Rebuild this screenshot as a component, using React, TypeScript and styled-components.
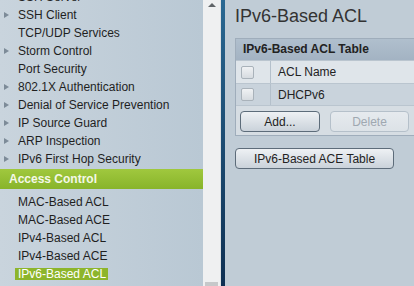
import React from "react";
import styled, { createGlobalStyle } from "styled-components";

const GlobalStyle = createGlobalStyle`
  html, body {
    margin: 0;
    padding: 0;
  }
  body {
    font-family: "Liberation Sans", Arial, sans-serif;
    font-size: 12px;
    overflow: hidden;
  }
`;

const Page = styled.div`
  display: flex;
  width: 414px;
  height: 286px;
  overflow: hidden;
`;

const Sidebar = styled.nav`
  width: 203px;
  flex-shrink: 0;
  background: linear-gradient(to right, #c9d4dd, #b9c8d4);
  overflow: hidden;
`;

const NavList = styled.ul`
  list-style: none;
  margin: -12px 0 0;
  padding: 0;
`;

const NavItem = styled.li`
  display: flex;
  align-items: center;
  height: 18px;
  color: #1f1f1f;
  white-space: nowrap;
`;

const ArrowSlot = styled.span`
  display: flex;
  align-items: center;
  width: 18px;
  padding-left: 4px;
  box-sizing: border-box;
  flex-shrink: 0;
`;

const SectionBar = styled.div`
  margin-top: 1px;
  height: 20px;
  line-height: 20px;
  padding-left: 9px;
  font-weight: bold;
  color: #f4f8e8;
  background: linear-gradient(#a0c83e, #88b42a);
`;

const SubList = styled.ul`
  list-style: none;
  margin: 4px 0 0;
  padding: 0;
`;

const SubItem = styled.li`
  height: 18px;
  line-height: 18px;
  padding-left: 18px;
  color: #1f1f1f;
  white-space: nowrap;
`;

const Selected = styled.span`
  display: inline-block;
  line-height: 12px;
  padding: 0 2px 0 3px;
  margin-left: -3px;
  background: #8db52b;
  color: #fff;
`;

const Scrollbar = styled.div`
  width: 18px;
  flex-shrink: 0;
  display: flex;
  flex-direction: column;
  align-items: center;
  background: #eff0f1;
  border-right: 1px solid #dfe2e4;
  box-sizing: border-box;
`;

const ScrollArrow = styled.span`
  margin-top: 3px;
  width: 0;
  height: 0;
  border-left: 4px solid transparent;
  border-right: 4px solid transparent;
  border-bottom: 4px solid #606468;
`;

const ScrollThumb = styled.span`
  margin-top: auto;
  width: 13px;
  height: 4px;
  background: #c6c8ca;
`;

const Divider = styled.div`
  width: 4px;
  flex-shrink: 0;
  background: linear-gradient(#2a6892, #0e2f52);
`;

const Main = styled.main`
  flex: 1;
  min-width: 0;
  padding-left: 10px;
  background: #c0ccd6;
  overflow: hidden;
`;

const Title = styled.h1`
  margin: 0 0 11px;
  padding-top: 6px;
  font-size: 18px;
  line-height: 21px;
  font-weight: normal;
  color: #333;
  white-space: nowrap;
`;

const Panel = styled.div`
  width: 200px;
  border: 1px solid #9fadbb;
  border-right: none;
  background: #d6dde3;
`;

const PanelHeader = styled.div`
  height: 21px;
  line-height: 21px;
  padding-left: 7px;
  font-weight: bold;
  color: #222;
  background: linear-gradient(#b0bfcd, #a3b3c3);
  white-space: nowrap;
`;

const Row = styled.div<{ $tone: "light" | "dark" }>`
  display: flex;
  height: ${(p) => (p.$tone === "light" ? 23 : 22)}px;
  background: ${(p) => (p.$tone === "light" ? "#dfe5ea" : "#c9d3dc")};
  border-top: 1px solid #bac5cf;
  box-sizing: border-box;
`;

const CheckCell = styled.div`
  width: 35px;
  flex-shrink: 0;
  display: flex;
  align-items: center;
  padding-left: 5px;
  box-sizing: border-box;
  border-right: 1px solid #b4c0cb;
`;

const Checkbox = styled.span`
  width: 13px;
  height: 13px;
  box-sizing: border-box;
  border: 1px solid #a9b2ba;
  border-radius: 2px;
  background: linear-gradient(#f0f2f4, #d6dbe0);
`;

const NameCell = styled.div`
  display: flex;
  align-items: center;
  padding-left: 7px;
  color: #222;
  white-space: nowrap;
`;

const ButtonRow = styled.div`
  display: flex;
  gap: 10px;
  height: 30px;
  padding: 5px 4px 0;
  box-sizing: border-box;
  border-top: 1px solid #bac5cf;
  background: #d6dde3;
`;

const Button = styled.button<{ $width: number }>`
  width: ${(p) => p.$width}px;
  height: 21px;
  padding: 0;
  flex-shrink: 0;
  font-family: "Liberation Sans", Arial, sans-serif;
  font-size: 12px;
  color: #222;
  border: 1px solid #5d6c7a;
  border-radius: 4px;
  background: linear-gradient(#eef1f4, #cad2da);

  &:disabled {
    color: #9fa8b1;
    border-color: #b5c0ca;
    background: linear-gradient(#e6eaee, #dce2e7);
  }
`;

const StandaloneButton = styled(Button)`
  margin-top: 12px;
  display: block;
`;

const Arrow = () => (
  <svg width="5" height="6" viewBox="0 0 5 6">
    <path d="M0 0 L5 3 L0 6 Z" fill="#7d8b98" />
  </svg>
);

const navItems = [
  { label: "SSH Server", arrow: true },
  { label: "SSH Client", arrow: true },
  { label: "TCP/UDP Services", arrow: false },
  { label: "Storm Control", arrow: true },
  { label: "Port Security", arrow: false },
  { label: "802.1X Authentication", arrow: true },
  { label: "Denial of Service Prevention", arrow: true },
  { label: "IP Source Guard", arrow: true },
  { label: "ARP Inspection", arrow: true },
  { label: "IPv6 First Hop Security", arrow: true },
];

const accessItems = [
  "MAC-Based ACL",
  "MAC-Based ACE",
  "IPv4-Based ACL",
  "IPv4-Based ACE",
  "IPv6-Based ACL",
];

const App = () => {
  return (
    <Page>
      <GlobalStyle />
      <Sidebar>
        <NavList>
          {navItems.map((item) => (
            <NavItem key={item.label}>
              <ArrowSlot>{item.arrow && <Arrow />}</ArrowSlot>
              {item.label}
            </NavItem>
          ))}
        </NavList>
        <SectionBar>Access Control</SectionBar>
        <SubList>
          {accessItems.map((label) => (
            <SubItem key={label}>
              {label === "IPv6-Based ACL" ? <Selected>{label}</Selected> : label}
            </SubItem>
          ))}
        </SubList>
      </Sidebar>
      <Scrollbar>
        <ScrollArrow />
        <ScrollThumb />
      </Scrollbar>
      <Divider />
      <Main>
        <Title>IPv6-Based ACL</Title>
        <Panel>
          <PanelHeader>IPv6-Based ACL Table</PanelHeader>
          <Row $tone="light">
            <CheckCell>
              <Checkbox />
            </CheckCell>
            <NameCell>ACL Name</NameCell>
          </Row>
          <Row $tone="dark">
            <CheckCell>
              <Checkbox />
            </CheckCell>
            <NameCell>DHCPv6</NameCell>
          </Row>
          <ButtonRow>
            <Button $width={80}>Add...</Button>
            <Button $width={79} disabled>
              Delete
            </Button>
          </ButtonRow>
        </Panel>
        <StandaloneButton $width={159}>IPv6-Based ACE Table</StandaloneButton>
      </Main>
    </Page>
  );
};

export default App;
